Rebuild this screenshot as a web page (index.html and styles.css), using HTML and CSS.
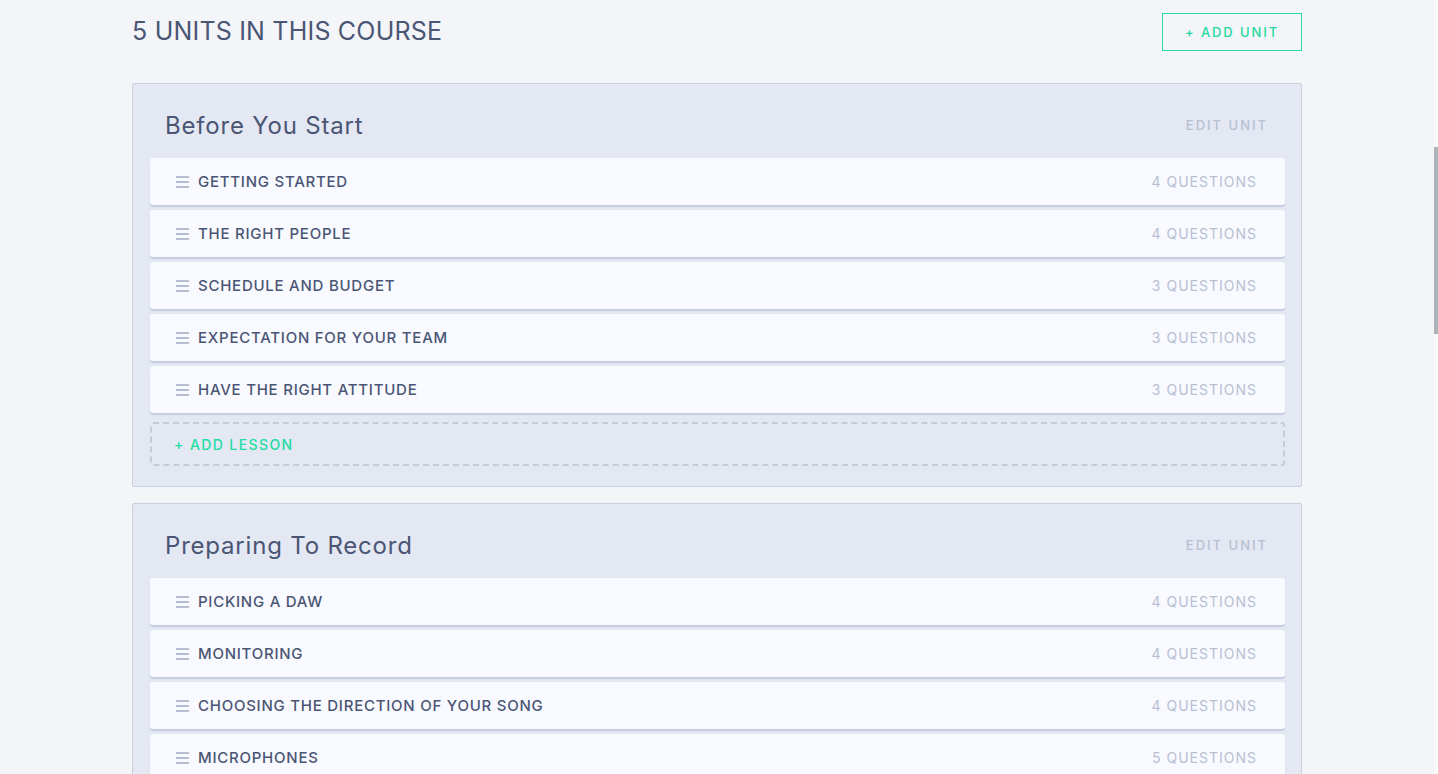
FILE: index.html
```html
<!DOCTYPE html>
<html lang="en">
<head>
<meta charset="utf-8">
<title>Course units</title>
<link rel="stylesheet" href="styles.css">
</head>
<body>
<div class="page">
  <div class="container">
    <header class="top">
      <h1 class="course-title">5 UNITS IN THIS COURSE</h1>
      <button class="btn-add-unit">+ ADD UNIT</button>
    </header>

    <section class="unit">
      <div class="unit-head">
        <h2 class="unit-title">Before You Start</h2>
        <a class="edit-unit">EDIT UNIT</a>
      </div>
      <ul class="lessons">
        <li class="lesson"><span class="grip"><i></i><i></i><i></i></span><span class="lesson-name">GETTING STARTED</span><span class="lesson-count">4 QUESTIONS</span></li>
        <li class="lesson"><span class="grip"><i></i><i></i><i></i></span><span class="lesson-name">THE RIGHT PEOPLE</span><span class="lesson-count">4 QUESTIONS</span></li>
        <li class="lesson"><span class="grip"><i></i><i></i><i></i></span><span class="lesson-name">SCHEDULE AND BUDGET</span><span class="lesson-count">3 QUESTIONS</span></li>
        <li class="lesson"><span class="grip"><i></i><i></i><i></i></span><span class="lesson-name">EXPECTATION FOR YOUR TEAM</span><span class="lesson-count">3 QUESTIONS</span></li>
        <li class="lesson"><span class="grip"><i></i><i></i><i></i></span><span class="lesson-name">HAVE THE RIGHT ATTITUDE</span><span class="lesson-count">3 QUESTIONS</span></li>
      </ul>
      <div class="add-lesson">+ ADD LESSON</div>
    </section>

    <section class="unit">
      <div class="unit-head">
        <h2 class="unit-title">Preparing To Record</h2>
        <a class="edit-unit">EDIT UNIT</a>
      </div>
      <ul class="lessons">
        <li class="lesson"><span class="grip"><i></i><i></i><i></i></span><span class="lesson-name">PICKING A DAW</span><span class="lesson-count">4 QUESTIONS</span></li>
        <li class="lesson"><span class="grip"><i></i><i></i><i></i></span><span class="lesson-name">MONITORING</span><span class="lesson-count">4 QUESTIONS</span></li>
        <li class="lesson"><span class="grip"><i></i><i></i><i></i></span><span class="lesson-name">CHOOSING THE DIRECTION OF YOUR SONG</span><span class="lesson-count">4 QUESTIONS</span></li>
        <li class="lesson"><span class="grip"><i></i><i></i><i></i></span><span class="lesson-name">MICROPHONES</span><span class="lesson-count">5 QUESTIONS</span></li>
      </ul>
    </section>
  </div>
</div>
<div class="scrollbar"><div class="scroll-thumb"></div></div>
</body>
</html>
```

FILE: styles.css
```css
html, body {
  margin: 0;
  padding: 0;
  height: 100%;
  overflow: hidden;
}

body {
  background: #f3f5f9;
  font-family: "Inter", "Noto Sans", sans-serif;
  color: #4b5574;
}

.page {
  margin-right: 4px;
}

.container {
  width: 1170px;
  margin: 0 auto;
}

.top {
  display: flex;
  justify-content: space-between;
  align-items: flex-start;
  padding-top: 13px;
  height: 83px;
  box-sizing: border-box;
}

.course-title {
  margin: 0;
  margin-top: 3px;
  font-size: 25px;
  font-weight: 400;
  letter-spacing: 0.2px;
  color: #4b5574;
  line-height: 30px;
}

.btn-add-unit {
  width: 140px;
  height: 38px;
  background: transparent;
  border: 1px solid #22dfa4;
  color: #1ed9a0;
  font-family: inherit;
  font-size: 13px;
  font-weight: 500;
  letter-spacing: 1.9px;
  padding: 0;
  cursor: pointer;
}

.unit {
  background: #e3e8f3;
  border: 1px solid #c9d0de;
  border-radius: 2px;
  padding: 0 16px 20px 17px;
  margin-bottom: 16px;
}

.unit-head {
  height: 74px;
  box-sizing: border-box;
  padding: 8px 17px 0 15px;
  display: flex;
  align-items: center;
  justify-content: space-between;
}

.unit-title {
  margin: 0;
  font-size: 24px;
  font-weight: 400;
  color: #4b5574;
  letter-spacing: 0.8px;
}

.edit-unit {
  font-size: 13px;
  font-weight: 500;
  letter-spacing: 2px;
  color: #b7c0d2;
  cursor: pointer;
}

.lessons {
  list-style: none;
  margin: 0;
  padding: 0;
}

.lesson {
  height: 47px;
  display: flex;
  align-items: center;
  background: #f8faff;
  border-radius: 3px;
  box-shadow: 0 2px 1px rgba(140, 152, 185, 0.35);
  margin-bottom: 5px;
  padding: 0 28px 0 26px;
}

.grip {
  display: flex;
  flex-direction: column;
  gap: 3px;
  width: 13px;
  margin-right: 9px;
}

.grip i {
  display: block;
  height: 2px;
  background: #b5bed0;
}

.lesson-name {
  flex: 1;
  font-size: 15px;
  font-weight: 500;
  color: #4b5574;
  letter-spacing: 0.75px;
}

.lesson-count {
  font-size: 14px;
  font-weight: 400;
  color: #b7c0d2;
  letter-spacing: 1px;
}

.add-lesson {
  margin-top: 9px;
  height: 44px;
  box-sizing: border-box;
  border: 2px dashed #c6cbd7;
  border-radius: 3px;
  display: flex;
  align-items: center;
  padding-left: 22px;
  font-size: 14px;
  font-weight: 500;
  letter-spacing: 1.4px;
  color: #22dca2;
}

.scrollbar {
  position: fixed;
  top: 0;
  right: 0;
  width: 4px;
  height: 100%;
  background: #f8f9fb;
}

.scroll-thumb {
  position: absolute;
  top: 147px;
  left: 0;
  width: 4px;
  height: 187px;
  background: #aab3b8;
}
```
